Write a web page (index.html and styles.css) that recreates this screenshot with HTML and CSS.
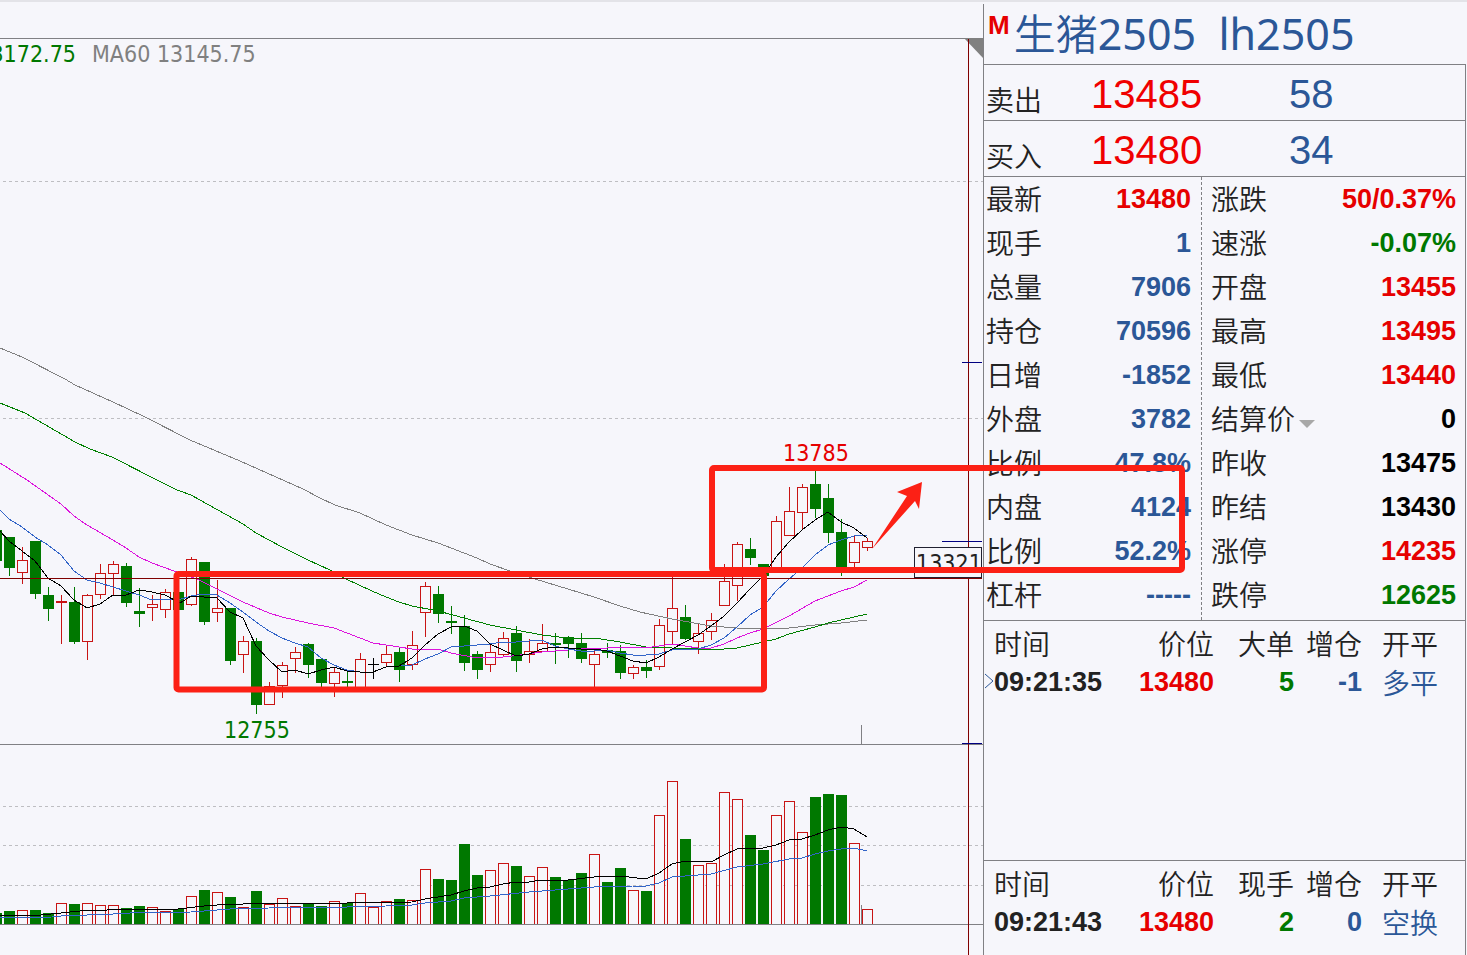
FILE: index.html
```html
<!DOCTYPE html>
<html lang="zh-CN">
<head>
    <meta charset="UTF-8">
    <meta name="viewport" content="width=device-width, initial-scale=1.0">
    <title>生猪2505</title>
    <link rel="stylesheet" href="styles.css">
</head>
<body>
    <div class="page">
        <div class="chart">
            <svg id="chart" viewBox="0 0 983 953">
                <!-- 坐标从页面顶部的灰条算起 -->
                <g transform="translate(0 -2)">
                    <g class="grid">
                        <path d="M3 181.5H983M3 418.5H983M3 806.5H983M3 845.5H983M3 885.5H983"/>
                    </g>
                    <g id="candles"></g>
                    <g id="volumes"></g>
                    <g id="lines"></g>
                    <path class="frame" d="M0 38.5H983M0 744.5H983M0 924.5H983M861.5 725V744M861.5 905V924"/>
                    <path class="corner" d="M964 38H983V58Z"/>
                    <path class="cross" d="M0 578.5H982M968.5 39V955"/>
                    <path class="mark" d="M962 362.5H982M942 541.5H982M962 743.5H982"/>
                    <rect class="tag" x="914.5" y="547.5" width="67" height="30"/>
                    <text class="tag-text" x="916" y="571">13321</text>
                    <text class="down" x="76" y="62" text-anchor="end">13172.75</text>
                    <text class="ma60" x="92" y="62">MA60 13145.75</text>
                    <text class="up" x="783" y="461">13785</text>
                    <text class="down" x="224" y="738">12755</text>
                    <g class="note">
                        <rect x="176.5" y="574" width="587.5" height="115.5" rx="2"/>
                        <rect x="712" y="468" width="470" height="102" rx="2"/>
                        <path d="M872 549L907 496L897 492L922 482L919 509L915 501Z"/>
                    </g>
                </g>
            </svg>
        </div>
        <div class="quote">
            <h1><sup>M</sup><span class="name"><span class="cn">生猪</span>2505  lh2505</span></h1>
            <div class="order">
                <span class="label">卖出</span><span class="price">13485</span><span class="num">58</span>
            </div>
            <div class="order">
                <span class="label">买入</span><span class="price">13480</span><span class="num">34</span>
            </div>
            <div class="stats">
                <dl class="left">
                    <div><dt>最新</dt><dd class="red">13480</dd></div>
                    <div><dt>现手</dt><dd>1</dd></div>
                    <div><dt>总量</dt><dd>7906</dd></div>
                    <div><dt>持仓</dt><dd>70596</dd></div>
                    <div><dt>日增</dt><dd>-1852</dd></div>
                    <div><dt>外盘</dt><dd>3782</dd></div>
                    <div><dt>比例</dt><dd>47.8%</dd></div>
                    <div><dt>内盘</dt><dd>4124</dd></div>
                    <div><dt>比例</dt><dd>52.2%</dd></div>
                    <div><dt>杠杆</dt><dd>-----</dd></div>
                </dl>
                <dl class="right">
                    <div><dt>涨跌</dt><dd class="red">50/0.37%</dd></div>
                    <div><dt>速涨</dt><dd class="green">-0.07%</dd></div>
                    <div><dt>开盘</dt><dd class="red">13455</dd></div>
                    <div><dt>最高</dt><dd class="red">13495</dd></div>
                    <div><dt>最低</dt><dd class="red">13440</dd></div>
                    <div><dt><button type="button" class="drop">结算价</button></dt><dd class="black">0</dd></div>
                    <div><dt>昨收</dt><dd class="black">13475</dd></div>
                    <div><dt>昨结</dt><dd class="black">13430</dd></div>
                    <div><dt>涨停</dt><dd class="red">14235</dd></div>
                    <div><dt>跌停</dt><dd class="green">12625</dd></div>
                </dl>
            </div>
            <div class="trades big">
                <table>
                    <tr><th class="time">时间</th><th class="cost">价位</th><th class="vol">大单</th><th class="add">增仓</th><th class="kind">开平</th></tr>
                    <tr>
                        <td class="time"><svg class="arrow" width="9" height="16" viewBox="0 0 9 16"><path d="M0 1L8 8L0 15"/></svg>09:21:35</td>
                        <td class="cost red">13480</td><td class="vol green">5</td><td class="add">-1</td><td class="kind">多平</td>
                    </tr>
                </table>
            </div>
            <div class="trades">
                <table>
                    <tr><th class="time">时间</th><th class="cost">价位</th><th class="vol">现手</th><th class="add">增仓</th><th class="kind">开平</th></tr>
                    <tr>
                        <td class="time">09:21:43</td>
                        <td class="cost red">13480</td><td class="vol green">2</td><td class="add">0</td><td class="kind">空换</td>
                    </tr>
                </table>
            </div>
        </div>
    </div>
    <script src="chart.js"></script>
</body>
</html>
```
FILE: styles.css
```css
*{
    padding: 0;
    margin: 0;
    box-sizing: border-box;
}
body{
    background-color: #f6f6fb;
    border-top: 2px solid #e3e3e8;
    font-family: "Liberation Sans", "Noto Sans CJK SC", sans-serif;
    overflow-x: hidden;
}
.page{
    display: flex;
    min-height: calc(100vh - 2px);
}
/* 左侧K线图 */
.chart{
    flex: 1;
    min-width: 0;
}
.chart svg{
    display: block;
    width: 100%;
    height: auto;
    overflow: visible;
    position: relative;
    z-index: 1;
    pointer-events: none;
}
.chart text{
    font-family: "DejaVu Sans Condensed", "Noto Sans", sans-serif;
    font-size: 23px;
}
.grid path{
    stroke: #bebec2;
    stroke-dasharray: 3 3;
}
.frame{
    stroke: #808084;
    fill: none;
}
.corner{
    fill: #808080;
}
.cross{
    stroke: #800000;
}
.mark{
    stroke: #000080;
}
.tag{
    fill: #f6f6fb;
    stroke: #202030;
}
.tag-text{
    fill: #222;
}
.up{
    fill: #e60000;
}
.down{
    fill: #007800;
}
.ma60{
    fill: #808080;
}
.note rect{
    fill: none;
    stroke: #fc2015;
    stroke-width: 6;
}
.note path{
    fill: #fc2015;
}
.rise{
    fill: #f6f6fb;
    stroke: #c81414;
}
.fall{
    fill: #007800;
    stroke: #007800;
}
.flat{
    fill: #000;
    stroke: #000;
}
.line{
    fill: none;
    shape-rendering: crispEdges;
}
.black-line{
    stroke: #000;
}
.blue-line{
    stroke: #3264c8;
}
.pink-line{
    stroke: #dc14dc;
}
.green-line{
    stroke: #008000;
}
.gray-line{
    stroke: #808080;
}
/* 右侧报价 */
.quote{
    display: flex;
    flex-direction: column;
    width: 483px;
    margin: 2px 1px 0 0;
    border-left: 1px solid #808084;
    color: #2b5797;
}
h1{
    display: flex;
    height: 60px;
    padding-left: 4px;
    gap: 4px;
    font-weight: normal;
}
h1 sup{
    font-size: 26px;
    line-height: 42px;
    font-weight: bold;
    color: #e60000;
}
.name{
    font-family: "Noto Sans", "Noto Sans CJK SC", sans-serif;
    font-size: 43px;
    line-height: 60px;
    white-space: pre;
}
.cn{
    font-size: 42px;
    font-weight: 350;
}
.order, .stats, .trades{
    border-top: 1px solid #808084;
    border-right: 1px solid #808084;
}
.order{
    display: flex;
    height: 56px;
    padding-left: 2px;
    font-size: 40px;
    line-height: 58px;
}
.label, dt, th, .kind{
    font-family: "Noto Sans CJK SC", sans-serif;
    font-size: 28px;
    font-weight: 350;
}
.label, dt, th{
    color: #222;
}
.order .label{
    width: 105px;
    line-height: 68px;
}
.order .price{
    width: 198px;
    color: #f00000;
}
.stats{
    display: flex;
    height: 444px;
}
.stats dl div{
    display: flex;
    justify-content: space-between;
    height: 44px;
    line-height: 44px;
}
.stats dt{
    line-height: 42px;
}
.left{
    width: 218px;
    padding: 0 10px 0 2px;
    border-right: 1px dashed #808084;
}
.right{
    flex: 1;
    padding: 0 9px;
}
dd{
    font-size: 27px;
    font-weight: bold;
}
.red{
    color: #e60000;
}
.green{
    color: #007800;
}
.black{
    color: #000;
}
.drop{
    display: flex;
    align-items: center;
    gap: 4px;
    height: 42px;
    border: 0;
    background: none;
    font: inherit;
    color: inherit;
}
.drop::after{
    content: "";
    border: 8px solid transparent;
    border-top-color: #a8a8a8;
    border-bottom: 0;
    margin-top: 12px;
}
.trades{
    flex: 1;
    padding: 2px 0 0 10px;
}
.big{
    flex: none;
    height: 240px;
}
table{
    border-collapse: collapse;
    table-layout: fixed;
    width: 446px;
}
th{
    height: 40px;
    line-height: 40px;
}
td{
    height: 38px;
    line-height: 38px;
    font-size: 27px;
    font-weight: bold;
    text-align: right;
}
.time{
    width: 120px;
    text-align: left;
    position: relative;
}
td.time{
    color: #222;
}
.cost{
    width: 100px;
    text-align: right;
}
.vol{
    width: 80px;
    text-align: right;
}
.add{
    width: 68px;
    text-align: right;
}
.kind{
    text-align: left;
    padding-left: 20px;
    white-space: nowrap;
}
.arrow{
    position: absolute;
    left: -9px;
    top: 10px;
    fill: none;
    stroke: #2b5797;
}
```
FILE: chart.js
```js
// 每根K线: [类型, 最高, 实体上沿, 实体下沿, 最低, 成交量上沿]
var data = [
    ['fall', 530, 530, 561, 561, 913],
    ['fall', 537, 537, 568, 576, 911],
    ['rise', 547, 560, 573, 584, 910],
    ['fall', 541, 541, 594, 599, 910],
    ['fall', 587, 595, 609, 621, 913],
    ['rise', 595, 601, 603, 644, 903],
    ['fall', 587, 602, 642, 644, 904],
    ['rise', 594, 595, 642, 660, 903],
    ['rise', 564, 573, 595, 599, 905],
    ['rise', 561, 564, 574, 595, 905],
    ['fall', 563, 566, 603, 607, 908],
    ['fall', 588, 611, 614, 627, 906],
    ['rise', 595, 604, 608, 621, 907],
    ['rise', 589, 592, 610, 618, 911],
    ['fall', 592, 592, 610, 610, 909],
    ['rise', 557, 559, 605, 606, 896],
    ['fall', 562, 562, 622, 625, 890],
    ['rise', 580, 608, 613, 622, 892],
    ['fall', 608, 608, 661, 665, 897],
    ['rise', 636, 641, 655, 673, 907],
    ['fall', 638, 641, 705, 714, 891],
    ['rise', 682, 686, 705, 705, 904],
    ['rise', 662, 665, 686, 698, 898],
    ['rise', 647, 652, 659, 673, 906],
    ['fall', 643, 644, 665, 678, 903],
    ['fall', 659, 659, 683, 687, 906],
    ['rise', 667, 672, 684, 697, 901],
    ['fall', 671, 681, 683, 687, 903],
    ['rise', 653, 659, 688, 688, 893],
    ['flat', 658, 664, 665, 679, 907],
    ['rise', 646, 654, 663, 666, 901],
    ['fall', 647, 652, 670, 682, 899],
    ['rise', 631, 645, 665, 670, 900],
    ['rise', 582, 586, 613, 637, 869],
    ['fall', 586, 594, 614, 623, 879],
    ['fall', 606, 621, 623, 634, 880],
    ['fall', 615, 626, 663, 671, 844],
    ['fall', 651, 654, 670, 679, 875],
    ['rise', 645, 652, 665, 672, 870],
    ['rise', 632, 638, 655, 657, 863],
    ['fall', 626, 633, 661, 672, 866],
    ['rise', 639, 651, 655, 663, 876],
    ['rise', 624, 643, 652, 652, 867],
    ['fall', 633, 643, 645, 664, 877],
    ['fall', 636, 637, 644, 658, 880],
    ['fall', 633, 643, 659, 663, 873],
    ['rise', 651, 654, 665, 687, 854],
    ['fall', 643, 650, 653, 658, 882],
    ['fall', 645, 651, 673, 679, 868],
    ['rise', 665, 667, 674, 679, 890],
    ['fall', 660, 667, 671, 678, 891],
    ['rise', 619, 625, 667, 670, 815],
    ['rise', 577, 608, 632, 645, 781],
    ['fall', 605, 617, 639, 640, 839],
    ['rise', 624, 633, 642, 654, 865],
    ['rise', 613, 620, 632, 640, 863],
    ['rise', 564, 581, 606, 606, 792],
    ['rise', 542, 544, 586, 601, 799],
    ['fall', 538, 549, 558, 565, 835],
    ['fall', 564, 564, 576, 576, 850],
    ['rise', 516, 521, 570, 570, 815],
    ['rise', 487, 511, 536, 536, 801],
    ['rise', 484, 487, 513, 530, 832],
    ['fall', 471, 484, 509, 518, 797],
    ['fall', 484, 498, 533, 543, 794],
    ['fall', 519, 532, 570, 576, 795],
    ['rise', 535, 542, 563, 567, 843],
    ['rise', 538, 541, 548, 551, 909]
];
// 均线
var lines = {
    'gray-line': [
        '0,348 22,357 65,379 75,385 113,402 145,417 190,440 240,461 303,489 320,498 335,505 360,513 386,525 412,535 438,543 477,558 490,564 510,571 535,579 568,589 594,597 620,606 640,612 672,619 711,626 737,628 763,629 789,628 815,625 841,623 867,620'
    ],
    'green-line': [
        '0,403 25,413 75,442 90,449 112,457 157,480 177,490 191,495 243,524 256,533 282,547 308,560 330,570 346,579 372,591 386,597 399,602 412,606 438,611 464,618 490,625 516,630 542,635 568,638 594,638 620,642 646,647 672,648 698,649 711,650 737,648 763,642 776,639 789,634 815,627 828,623 854,617 867,614'
    ],
    'pink-line': [
        '0,463 27,480 61,504 74,516 87,525 113,540 126,548 139,557 152,563 174,571 197,579 217,589 243,602 269,613 282,617 308,623 334,628 347,633 373,643 399,647 412,649 438,649 451,653 477,658 503,657 529,654 542,652 568,650 581,648 607,648 620,647 646,648 672,644 698,648 711,648 724,644 737,638 750,633 763,629 789,616 815,601 841,591 854,587 867,580'
    ],
    'blue-line': [
        '0,510 9,519 22,527 35,537 48,545 61,555 74,571 87,580 100,583 113,587 126,591 139,595 152,600 165,599 178,600 191,596 204,594 217,595 230,603 243,612 256,622 269,631 282,638 295,643 308,647 321,658 334,665 347,670 360,672 373,672 386,667 399,666 412,665 425,659 438,654 451,647 464,646 477,645 490,644 503,642 516,642 529,641 542,640 555,646 568,649 581,651 594,651 607,650 620,653 633,655 646,655 659,654 672,650 685,649 698,649 711,645 724,638 737,627 750,615 763,607 776,591 789,579 802,568 815,555 828,545 841,540 854,536 867,535',
        '0,918 52,917 61,916 87,915 113,914 130,913 191,912 204,911 230,909 269,908 282,907 347,907 386,906 412,905 425,903 438,902 451,901 464,898 490,896 529,892 542,891 568,889 594,887 633,886 646,886 659,883 672,877 698,875 711,874 737,867 763,864 789,859 802,858 815,854 828,851 841,849 854,848 867,851'
    ],
    'black-line': [
        '0,531 9,541 22,551 35,561 48,578 61,586 74,600 87,608 100,604 113,595 126,595 139,590 152,592 165,595 180,603 191,596 204,597 217,598 230,612 243,618 256,646 269,660 282,672 295,670 308,674 321,670 334,667 347,671 360,672 373,672 386,667 399,666 412,658 425,645 438,634 451,627 464,626 477,631 490,644 503,650 516,656 529,654 542,649 555,647 568,648 581,649 594,649 607,651 620,656 633,661 646,663 659,657 672,649 685,642 698,635 711,626 724,616 737,603 750,589 763,576 776,557 789,542 802,530 815,520 828,512 841,522 854,528 867,538',
        '0,915 41,915 61,913 80,911 107,910 133,909 178,909 204,906 217,905 243,904 256,903 347,903 360,902 373,903 412,902 425,899 451,895 464,891 477,888 490,887 503,884 516,882 529,882 542,880 568,880 594,877 620,876 646,879 659,873 672,864 685,861 711,862 724,855 737,849 763,848 776,845 789,840 802,839 815,835 828,830 841,827 854,829 867,837'
    ]
};

function add(parent, name, attrs) {
    var el = document.createElementNS('http://www.w3.org/2000/svg', name);
    for (var key in attrs) {
        el.setAttribute(key, attrs[key]);
    }
    parent.appendChild(el);
}

var candles = document.getElementById('candles');
var volumes = document.getElementById('volumes');
for (var i = 0; i < data.length; i++) {
    var d = data[i];
    // 间距13，第一根在画面左侧外
    var x = i * 13 - 4 + 0.5;
    add(candles, 'path', {class: d[0], d: 'M' + x + ' ' + d[1] + 'V' + d[4]});
    if (d[0] == 'flat') {
        // 开盘收盘同价，画十字
        add(candles, 'path', {class: 'flat', d: 'M' + (x - 5.5) + ' ' + (d[2] + 0.5) + 'h11'});
    } else {
        add(candles, 'rect', {class: d[0], x: x - 5, y: d[2] + 0.5, width: 10, height: d[3] - d[2] - 1});
    }
    add(volumes, 'rect', {class: d[0] == 'fall' ? 'fall' : 'rise', x: x - 5, y: d[5] + 0.5, width: 10, height: 924 - d[5]});
}
var box = document.getElementById('lines');
for (var name in lines) {
    for (var j = 0; j < lines[name].length; j++) {
        add(box, 'polyline', {class: 'line ' + name, points: lines[name][j]});
    }
}
```
